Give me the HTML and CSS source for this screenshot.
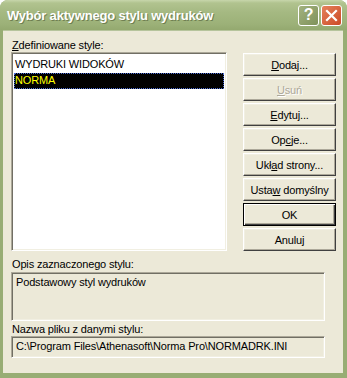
FILE: index.html
```html
<!DOCTYPE html>
<html lang="pl">
<head>
  <meta charset="UTF-8" />
  <title>Wybór aktywnego stylu wydruków</title>
  <link rel="stylesheet" href="styles.css">
</head>
<body>
  <div class="window">
    <div class="titlebar">
      <span class="title">Wybór aktywnego stylu wydruków</span>
      <div class="caption-btns">
        <span class="cap help">?</span>
        <span class="cap close">
          <svg width="13" height="13" viewBox="0 0 13 13"><path d="M2 2 L11 11 M11 2 L2 11" stroke="#fff" stroke-width="2.2" stroke-linecap="square"/></svg>
        </span>
      </div>
    </div>

    <div class="frame">
      <div class="top">
        <div class="list-col">
          <div class="label"><u>Z</u>definiowane style:</div>
          <div class="listbox">
            <div class="item">WYDRUKI WIDOKÓW</div>
            <div class="item selected">NORMA</div>
          </div>
        </div>
        <div class="buttons">
          <button class="btn"><u>D</u>odaj...</button>
          <button class="btn disabled"><u>U</u>suń</button>
          <button class="btn"><u>E</u>dytuj...</button>
          <button class="btn">Op<u>c</u>je...</button>
          <button class="btn">Ukł<u>a</u>d strony...</button>
          <button class="btn">Usta<u>w</u> domyślny</button>
          <button class="btn default">OK</button>
          <button class="btn">Anuluj</button>
        </div>
      </div>

      <div class="label desc-label">Opis zaznaczonego stylu:</div>
      <div class="field desc">Podstawowy styl wydruków</div>

      <div class="label file-label">Nazwa pliku z danymi stylu:</div>
      <div class="field path">C:\Program Files\Athenasoft\Norma Pro\NORMADRK.INI</div>
    </div>
  </div>
</body>
</html>
```

FILE: styles.css
```css
/* ── BASE ─────────────────────────────────────────────── */
* { margin: 0; padding: 0; box-sizing: border-box; }
body {
  font-family: 'Liberation Sans', Arial, sans-serif;
  font-size: 11px;
  letter-spacing: -0.15px;
  color: #000;
  background: #fff;
}

/* ── WINDOW FRAME ─────────────────────────────────────── */
.window {
  width: 347px;
  height: 378px;
  display: flex;
  flex-direction: column;
  background: #98ad74;
  border-radius: 8px 8px 0 0;
  overflow: hidden;
}
.titlebar {
  height: 30px;
  display: flex;
  align-items: center;
  justify-content: space-between;
  padding: 0 5px 0 7px;
  background: linear-gradient(#c7d6ab 0, #b1c38f 3px, #a5b982 12px, #9cb178 24px, #94a96f 30px);
}
.title {
  font-weight: bold;
  font-size: 13px;
  letter-spacing: -0.2px;
  color: #fff;
  text-shadow: 1px 1px 0 #6f7f52;
  padding-top: 1px;
}
.caption-btns { display: flex; gap: 2px; }
.cap {
  width: 21px;
  height: 21px;
  border: 1px solid #fff;
  border-radius: 3px;
  display: flex;
  align-items: center;
  justify-content: center;
  color: #fff;
  font-weight: bold;
  font-size: 16px;
}
.help { background: linear-gradient(135deg, #a3b27f, #7f925a); }
.close { background: linear-gradient(135deg, #e5825c, #cc4a26); }

/* ── CLIENT AREA ──────────────────────────────────────── */
.frame {
  flex: 1;
  margin: 0 4px 5px 3px;
  background: #ece9d8;
  padding: 8px 7px 0 8px;
  border-top: 1px solid #b6c49c;
}
.top { display: flex; gap: 16px; }
.list-col { width: 216px; }
.label { height: 13px; line-height: 13px; padding-left: 1px; }

.listbox {
  height: 199px;
  background: #fff;
  border: 1px solid;
  border-color: #aca899 #fff #fff #aca899;
  box-shadow: inset 1px 1px 0 #716f64, inset -1px -1px 0 #f1efe2;
  padding: 4px 2px;
}
.item {
  height: 16px;
  line-height: 15px;
  padding-left: 1px;
  white-space: nowrap;
}
.item.selected {
  background: #000;
  color: #ffff00;
  outline: 1px dotted #4a6cd4;
  outline-offset: -1px;
}

/* ── BUTTONS ──────────────────────────────────────────── */
.buttons {
  width: 93px;
  display: flex;
  flex-direction: column;
  gap: 2px;
  padding-top: 14px;
}
.btn {
  height: 23px;
  font: inherit;
  letter-spacing: inherit;
  background: #ece9d8;
  border: 1px solid;
  border-color: #fff #404040 #404040 #fff;
  box-shadow: inset -1px -1px 0 #aca899, inset 1px 1px 0 #f1efe2;
  color: #000;
}
.btn.disabled { color: #aca899; text-shadow: 1px 1px 0 #fff; }
.btn.default {
  border: 1px solid #000;
  box-shadow: inset 1px 1px 0 #fff, inset -1px -1px 0 #404040, inset -2px -2px 0 #aca899;
}

/* ── READ-ONLY FIELDS ─────────────────────────────────── */
.desc-label { margin-top: 7px; }
.file-label { margin-top: 2px; }
.field {
  width: 314px;
  border: 1px solid;
  border-color: #aca899 #fff #fff #aca899;
  box-shadow: inset 1px 1px 0 #716f64, inset -1px -1px 0 #f1efe2;
  padding: 2px 4px;
  line-height: 15px;
  white-space: nowrap;
}
.desc { height: 49px; margin-top: 1px; }
.path { height: 22px; }
```
